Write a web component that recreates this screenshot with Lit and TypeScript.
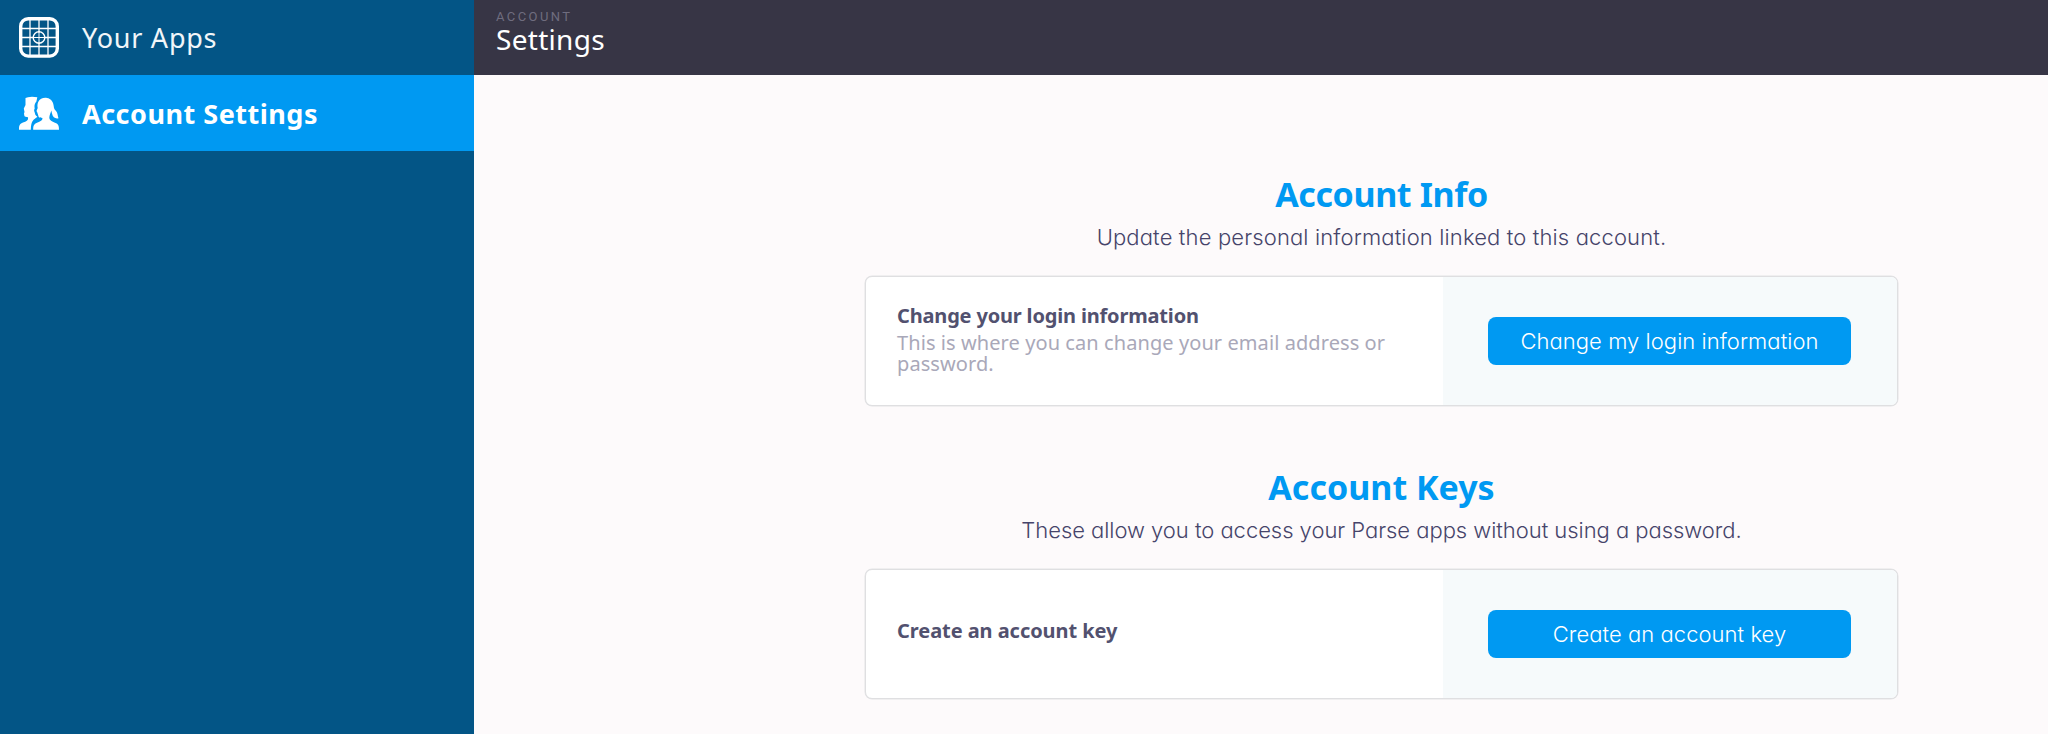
import { LitElement, html, css, svg } from "lit";
import { customElement, property } from "lit/decorators.js";

@customElement("settings-card")
class SettingsCard extends LitElement {
  @property() label = "";
  @property() note = "";
  @property() action = "";

  static styles = css`
    :host { display: block; }
    .card {
      box-sizing: border-box; display: flex; width: 1033px; height: 130px;
      border: 1px solid #dfdfe1; border-radius: 7px; overflow: hidden; background: #fff;
      box-shadow: 0 0 0 0.5px #e4e4e6;
    }
    .info {
      box-sizing: border-box; width: 577px; padding: 0 33px 6px 31px;
      display: flex; flex-direction: column; justify-content: center;
    }
    .info.full { padding-bottom: 0; }
    .label { font: 700 20px/26px "Noto Sans", sans-serif; letter-spacing: -0.06px; color: #52516f; }
    .full .label { letter-spacing: -0.17px; }
    .note {
      font: 400 20px/21px "Noto Sans", sans-serif; letter-spacing: 0.08px;
      color: #a9a8b9; padding-top: 3px; margin-bottom: 6px;
    }
    .action { flex: 1; background: #f6fafb; display: flex; align-items: center; padding: 0 46px 0 45px; }
    button {
      flex: 1; height: 48px; border: 0; border-radius: 8px; padding: 0; background: #0099f2; color: #fff;
      font: 350 22px/48px Inter, sans-serif; font-feature-settings: "cv11"; letter-spacing: 0.05px;
    }
  `;

  render() {
    return html`
      <div class="card">
        <div class="info ${this.note ? "full" : ""}">
          <div class="label">${this.label}</div>
          ${this.note ? html`<div class="note">${this.note}</div>` : ""}
        </div>
        <div class="action"><button>${this.action}</button></div>
      </div>`;
  }
}

@customElement("app-root")
class AppRoot extends LitElement {
  static styles = css`
    :host { display: block; height: 734px; overflow: hidden; font-family: "Noto Sans", sans-serif; }
    .page { display: flex; height: 100%; }
    .side { width: 474px; background: #035586; flex: none; }
    .item {
      display: flex; align-items: center; height: 75px; box-sizing: border-box;
      padding-left: 19px; gap: 23px; color: #fff; font-size: 27px; line-height: 36px;
    }
    .item svg { width: 40px; height: 41px; display: block; }
    .item.apps { font-weight: 400; letter-spacing: 0.75px; color: #f1f6f9; }
    .item.active { height: 76px; background: #0099f2; font-weight: 700; letter-spacing: 0.5px; }
    .active span { padding-top: 1px; }
    .main { flex: 1; background: #fdfafb; }
    .head { box-sizing: border-box; height: 75px; background: #373545; padding: 9px 0 0 22px; }
    .crumb { font: 400 13px/16px Roboto, sans-serif; letter-spacing: 2.4px; color: #6f6d7f; }
    .title { font-size: 28px; font-weight: 400; line-height: 29px; color: #fff; letter-spacing: 0.3px; }
    .content { width: 1033px; margin-left: 391px; padding-top: 99px; }
    section { height: 293px; text-align: center; }
    h2 { margin: 0; font-size: 34px; font-weight: 700; line-height: 40px; letter-spacing: -0.4px; color: #0099f2; }
    .keys h2 { letter-spacing: 0; }
    .sub {
      margin: 9px 0 25px; font: 350 22px/28px Inter, sans-serif; font-feature-settings: "cv11";
      letter-spacing: 0.14px; color: #46446a;
    }
    .keys .sub { letter-spacing: -0.04px; }
    settings-card { text-align: left; }
  `;

  private gridIcon = svg`<svg viewBox="0 0 40 41" fill="none" stroke="#fff">
    <rect x="1.7" y="1.7" width="36.6" height="37.4" rx="7.5" stroke-width="3.4"/>
    <path stroke-width="1.3" d="M11 2v37M20 2v13.5M20 25.500V39M29 2v37M2 11.500h36M2 20.500h13M25 20.500h13M2 29.500h36"/>
    <circle cx="20" cy="20.500" r="5.800" stroke-width="1.400"/>
    <path stroke-width="1" d="M20 15v11M14.500 20.500h11"/></svg>`;

  private peopleIcon = svg`<svg viewBox="0 0 40 41" fill="#fff">
    <path d="M6.500 5 9 4.200 13 3.700 18.300 4.200 17.400 8.500C15.300 11 15.300 13.500 15.700 15.500 14.500 17.500 15.500 18.500 16 20.500 16.400 23 18 22.500 18.300 24 15 26.500 12 27 11.800 36.800H0C-.1 32.500.5 31 4 29.500 8 28 9.500 27 9 24.200 7.500 23.800 5.500 24.300 5.300 22.500L5 20.500 5.500 19 4.800 15.500 6.500 12Z"/>
    <path d="M19.200 9C20.900 5.500 24 4.500 28 4.900 32 5.500 34.500 9 34.700 13 35 17 36.500 16.500 38 19.500 38.800 21.500 38.700 23 39.500 25.200 36.500 26 33.800 24.500 33 20.500L32.300 17.500C31.800 20 30.300 22 30.300 25 30.500 27.500 33 28.500 36 29.700 39.500 31 40 33 40 36.800H14.200C14.200 32.500 15 31 18 29.700 21.500 28.200 23.500 27.500 23.500 24.900 22 24.800 19.800 25 19.500 23.500 19.300 22 18.700 21 18.300 19.500L17.500 18 18.700 15C18.300 13 18.300 11 19.200 9Z"/></svg>`;

  render() {
    return html`
      <div class="page">
        <nav class="side">
          <div class="item apps">${this.gridIcon}<span>Your Apps</span></div>
          <div class="item active">${this.peopleIcon}<span>Account Settings</span></div>
        </nav>
        <main class="main">
          <header class="head">
            <div class="crumb">ACCOUNT</div>
            <div class="title">Settings</div>
          </header>
          <div class="content">
            <section>
              <h2>Account Info</h2>
              <p class="sub">Update the personal information linked to this account.</p>
              <settings-card label="Change your login information"
                note="This is where you can change your email address or password."
                action="Change my login information"></settings-card>
            </section>
            <section class="keys">
              <h2>Account Keys</h2>
              <p class="sub">These allow you to access your Parse apps without using a password.</p>
              <settings-card label="Create an account key" action="Create an account key"></settings-card>
            </section>
          </div>
        </main>
      </div>`;
  }
}
